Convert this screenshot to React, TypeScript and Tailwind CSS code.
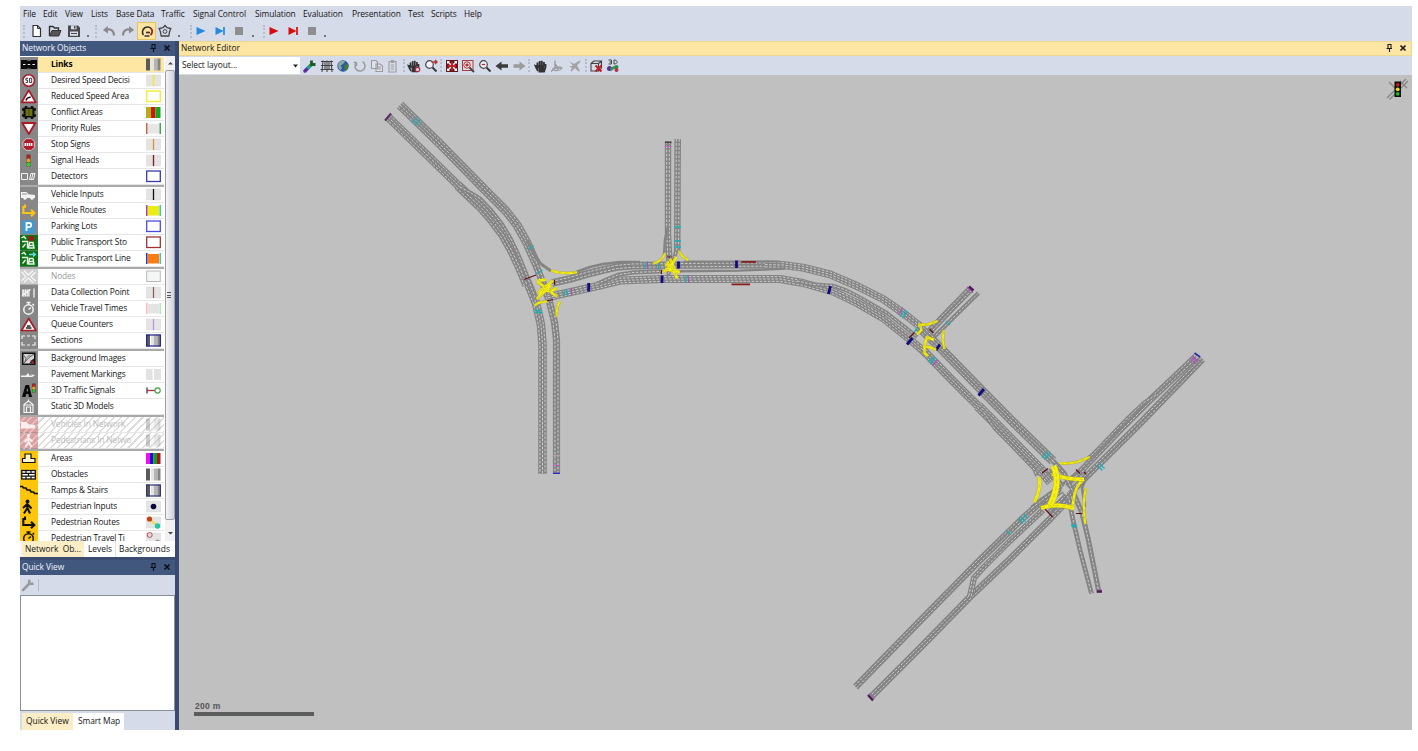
import React from "react";

type Pt = [number, number];

/* ---------- road network drawing ---------- */

function offsetPath(pts: Pt[], d: number): string {
  return pts
    .map((p, i) => {
      const a = pts[Math.max(0, i - 1)];
      const b = pts[Math.min(pts.length - 1, i + 1)];
      const dx = b[0] - a[0];
      const dy = b[1] - a[1];
      const l = Math.hypot(dx, dy) || 1;
      const x = p[0] - (dy / l) * d;
      const y = p[1] + (dx / l) * d;
      return (i ? "L" : "M") + x.toFixed(2) + " " + y.toFixed(2);
    })
    .join("");
}

function Road({ pts, w, lanes }: { pts: Pt[]; w: number; lanes: number }) {
  const pitch = (w - 1) / Math.max(lanes, 1);
  return (
    <g fill="none" strokeLinejoin="round">
      <path d={offsetPath(pts, 0)} stroke="#848484" strokeWidth={w} />
      {Array.from({ length: lanes }, (_, i) => (
        <path
          key={i}
          d={offsetPath(pts, (i - (lanes - 1) / 2) * pitch)}
          stroke="#cccccc"
          strokeWidth={1}
          strokeDasharray="2.6 1.5"
        />
      ))}
    </g>
  );
}

const roads: { pts: Pt[]; w: number; lanes: number }[] = [
  // north-west arm
  { pts: [[517, 225], [527, 243], [537, 268], [543, 283], [549, 300], [554.5, 322], [556.5, 340], [556.5, 473.5]], w: 7.2, lanes: 2 },
  { pts: [[400, 105], [440, 144], [493, 198], [506, 211], [517, 225], [527, 243], [535, 261]], w: 9, lanes: 3 },
  { pts: [[388, 117], [425, 153], [463, 190], [477, 203], [492, 218], [505, 235], [514, 251], [521, 268], [529, 286], [536, 303], [541, 325], [542.5, 345], [542.5, 474]], w: 8.6, lanes: 3 },
  { pts: [[458, 185.5], [470, 197], [480, 206.5], [491, 219], [503, 235], [512, 251], [519, 266], [527, 285]], w: 9.4, lanes: 3 },
  { pts: [[460, 187], [471, 193], [480, 198.5], [491, 210], [502, 224], [511, 239], [519, 256], [527, 276], [535, 297]], w: 4, lanes: 1 },
  { pts: [[527, 240], [534, 254], [541, 264], [551, 271]], w: 3, lanes: 0 },
  { pts: [[576, 272], [590, 267], [603, 264], [620, 262], [640, 262]], w: 2.6, lanes: 0 },
  // corridor, upper carriageway
  { pts: [[552, 283], [570, 279], [587, 274], [603, 270], [617, 267], [633, 265.6], [668, 265.3], [700, 265], [760, 264.6], [783, 265]], w: 7.6, lanes: 2 },
  { pts: [[765, 264.6], [783, 265], [803, 267.6], [830, 274.4], [857, 286], [883, 299], [904, 313.6], [923, 328.6]], w: 8, lanes: 3 },
  { pts: [[684, 261.4], [780, 261.4]], w: 2, lanes: 0 },
  // corridor, lower carriageway
  { pts: [[548, 298], [557, 295], [573, 291.5], [600, 285.5], [620, 280.5], [663, 279], [720, 279], [780, 279], [803, 283], [833, 291.5], [857, 303], [883, 318], [908, 338], [927, 354]], w: 8, lanes: 3 },
  { pts: [[597, 284], [608, 279], [619, 274.5], [634, 272.4], [662, 271.4]], w: 4.2, lanes: 1 },
  { pts: [[679, 271.2], [740, 270.6], [765, 269.6], [785, 268.5]], w: 2.4, lanes: 0 },
  { pts: [[797, 281], [813, 284.4], [833, 285.6], [847, 290.6], [860, 297.4], [887, 313], [905, 327], [917, 337]], w: 3.8, lanes: 1 },
  // north arm
  { pts: [[668, 141.5], [668, 235], [669.5, 262]], w: 6.4, lanes: 2 },
  { pts: [[667.5, 228], [665, 240], [664, 256]], w: 2.6, lanes: 0 },
  { pts: [[677.7, 139], [677.2, 252]], w: 6.6, lanes: 2 },
  { pts: [[677, 248], [673, 262], [668, 275]], w: 4, lanes: 1 },
  // small north-east arm
  { pts: [[970.5, 289], [948, 312], [929, 332]], w: 7.2, lanes: 2 },
  { pts: [[978.5, 293], [955, 316], [934, 337]], w: 4.4, lanes: 1 },
  // corridor towards the south-east
  { pts: [[918, 326], [940, 347.5], [980, 388.5], [1013, 422], [1053, 461]], w: 9, lanes: 3 },
  { pts: [[921, 348], [950, 378], [987, 415], [1000, 428], [1037, 466], [1046, 476]], w: 8.4, lanes: 3 },
  { pts: [[978, 406], [988, 416], [999, 427], [1041, 470], [1051, 482]], w: 10, lanes: 4 },
  { pts: [[984, 413], [995, 429], [1008, 442], [1034, 469], [1037, 476]], w: 3.6, lanes: 1 },
  // big junction arms
  { pts: [[1196, 356.5], [1148, 402], [1120, 430], [1080, 472], [1040, 508]], w: 6.8, lanes: 2 },
  { pts: [[1156, 395], [1144, 402.5], [1129, 416.5], [1092, 455], [1088, 458]], w: 3.6, lanes: 1 },
  { pts: [[1202.5, 359], [1140, 423.5], [1093, 470], [1050, 513]], w: 7, lanes: 2 },
  { pts: [[855.5, 687], [920, 621], [980, 560], [1023, 518], [1042, 501], [1062, 490]], w: 6.8, lanes: 2 },
  { pts: [[870, 698], [920, 648], [970, 597], [1010, 559], [1052, 517], [1070, 498]], w: 6.8, lanes: 2 },
  { pts: [[970, 596], [974, 578], [983, 568], [1010, 541], [1043, 510]], w: 6, lanes: 2 },
  { pts: [[1032, 508], [1050, 494], [1085, 470]], w: 5, lanes: 1 },
  { pts: [[1053, 461], [1064, 473], [1074, 494], [1082, 513], [1088, 538], [1099, 592.5]], w: 5.2, lanes: 1 },
  { pts: [[1048, 470], [1060, 483], [1069, 499], [1073, 520], [1080, 550], [1091.5, 593.5]], w: 4.8, lanes: 1 },
  { pts: [[1087, 476], [1082, 488], [1085, 507]], w: 2.6, lanes: 0 },
];

const marks: { c: string; w: number; d: string }[] = [
  { c: "#5b2a66", w: 2, d: "M385 120.5L391 113.5" },
  { c: "#c05ac0", w: 1, d: "M665 146.5H671.5M553 465.5H560" },
  { c: "#4a3a4a", w: 1.6, d: "M665 142.3H671.5" },
  { c: "#b09ab0", w: 1, d: "M553 455.5H560" },
  { c: "#3030c0", w: 1.4, d: "M553 473.3H560" },
  { c: "#1eaeb6", w: 1.3, d: "M412 123L417.5 117.5M415 125.5L420 120M527.5 249.5L534 245.5M536 274L542.5 270M534.5 310.5H541.5M535.5 312.5H542M674 227H681M674 241H681M674 247H681M564.5 290V296M567 289.5V295.5M645.5 262V269M658.5 262V269M686 275V283M900 317L905 309.5M902.5 318.5L907.5 311M914 332L918 327.5M928 362L933.5 356.5M930 364L935.500 358M946 321L950 325M1042 457.500L1048.500 451.5M1044 459.500L1050.500 453.500M1097.500 465.500L1102.500 470.500M1099.500 463.500L1104.500 468.500M1071 525H1076.500M1071.500 526.500H1077M1018.500 518.500L1023 523.500M1021 516.500L1025.500 521.500M1024 514L1028 518.500M1006.500 530.500L1010.500 534.500" },
  { c: "#b24cc4", w: 1.1, d: "M571.5 288V295.5M647.5 261.5V269M688.5 275.5V283M898 315L903 307.5M932.5 365.5L938 360M967 287L973 292.5M1190 358L1195.5 363.5M1192.5 356L1198 361.5" },
  { c: "#120c80", w: 2.8, d: "M588.7 283V291.5M662 275.5V283M678.5 261.5V268.5M736.5 260.5V268M830.5 286L828.5 294M912.5 338L907 344.5M940 344.5L936 350M984 389L978.5 395.5" },
  { c: "#5e0f18", w: 1.2, d: "M524 279.5L536 275M554.5 280V285M546 301L553 299.5M667 257H671.5M661.5 270V274M679.5 270V273M909 338L914.5 332.5M929.5 329L933.5 333M1042 473L1048 468.5M1045 509L1052.5 517M1076 513.5H1082M1076 469.5L1080 473.5M1084 472L1086 474" },
  { c: "#861c1c", w: 1.8, d: "M741.5 261.8H756M731.5 284.3H750" },
  { c: "#4a2050", w: 2.4, d: "M969 286.5L973.5 290.5M868 695L873 700.5M1097 591.5H1102" },
  { c: "#3030a8", w: 2, d: "M1194.5 353L1200 357" },
  { c: "#a464b4", w: 1.2, d: "M869 693.5L874.5 699M1097 589.5H1101.5" },
];

const yellow: { w: number; d: string }[] = [
  { w: 2.2, d: "M551 270.5C558 273 566 274 577 272.2M653.5 263.5C659 262 664 258 665 253M679 251C681 256 684 258 688 260M556.5 316.5C556.5 309 557 305 560 301.5M534.5 305.5C539 301 544 302 547 301.5" },
  { w: 2.6, d: "M537 299C543 291 548 284 553 280.5M537 282C545 286 548 291 557 296.5M537 281L546 279.5M541 289L551 291L557 288M538 293L549 284M540 296L551 285.5" },
  { w: 2.6, d: "M663 272C669 270 673 263 676.5 257M665 264.5L673 267L677 278.5M665 269L680 272M667 261.5L676 275M670 259L675 270" },
  { w: 2.2, d: "M918 324.5C925 325.5 931 324 937.5 321M920 325L921.5 330L917 334.5M943.5 330.5C942.5 338 943 344 944.5 349" },
  { w: 2.5, d: "M927.5 336L924.5 345V353L928 356M925 347C931 346 934 349 936 350M927 337L934 340" },
  { w: 2.2, d: "M1060 462.8C1070 464.5 1080 462 1089.5 457M1086 488C1082.5 500 1084 512 1085.3 524" },
  { w: 3.2, d: "M1039 477C1041 486 1038 495 1034.5 502" },
  { w: 2.6, d: "M1084 479.5C1075 485 1074 496 1072.5 507" },
  { w: 4, d: "M1041 508C1052 504 1065 505 1074 508.5" },
  { w: 3.8, d: "M1052 474C1062 478 1072 479.5 1084 479.5" },
  { w: 6, d: "M1053.5 466C1059 477 1057 493 1050 505" },
];

function NetworkMap() {
  return (
    <svg className="absolute inset-0 h-full w-full" viewBox="179 75 1233 655" preserveAspectRatio="xMinYMin slice">
      {roads.map((r, i) => (
        <Road key={i} {...r} />
      ))}
      <path d="M1065 484L1070 489.5L1065.5 495L1061 490Z" fill="#c0c0c0" />
      {marks.map((m, i) => (
        <path key={i} d={m.d} stroke={m.c} strokeWidth={m.w} fill="none" />
      ))}
      {yellow.map((y, i) => (
        <g key={i} fill="none">
          <path d={y.d} stroke="#b5ae20" strokeWidth={y.w + 0.5} />
          <path d={y.d} stroke="#f6f010" strokeWidth={y.w - 0.3} />
          <path d={y.d} stroke="#c4bc2c" strokeWidth={0.6} strokeDasharray="4 3" />
        </g>
      ))}
      <g fill="none" stroke="#858585" strokeWidth="1.3">
        <path d="M1387 98L1406 79M1389.5 99.5L1408 81M1389 82L1396 89M1400 81L1407 88" />
      </g>
      <rect x="1394.5" y="81.5" width="6.5" height="15.5" fill="#0d0d0d" />
      <circle cx="1397.7" cy="84.8" r="1.9" fill="#c01818" />
      <circle cx="1397.7" cy="89.3" r="1.9" fill="#e8d820" />
      <circle cx="1397.7" cy="93.8" r="1.9" fill="#18b828" />
    </svg>
  );
}

/* ---------- network object list ---------- */

type IconKey = keyof typeof objectIcons;

const W = "#f4f4f4";
const routeArrow = "M5 2V4.500H3.300V10.500H14M11 7.300L14.300 10.500L11 13.700";
const tram = "M1.500 3.500L4 2L6 4.500M2 7H7.500V14M2.500 13L5.500 9.500M9.500 8L8.500 13.500H14L13 8ZM8.500 11H14";

const objectIcons = {
  links: (
    <g>
      <rect x="1" y="3.500" width="16" height="9" fill="#0a0a0a" />
      <path d="M3 8H15" stroke="#eee" strokeWidth="1" strokeDasharray="2.500 2.200" />
      <path d="M7 3.500H11M7 12.700H11" stroke="#777" strokeWidth="1.600" />
    </g>
  ),
  speed: (
    <g>
      <circle cx="8.700" cy="8" r="5.800" fill="#fff" stroke="#a81c28" strokeWidth="1.600" />
      <path d="M8 5.800H5.900V7.700H7.600V10H5.700M9.600 5.800H11.700V10H9.600Z" stroke="#222" fill="none" strokeWidth="0.900" />
    </g>
  ),
  reduced: (
    <g>
      <path d="M8.700 1.800L15.700 13.800H1.700Z" fill="#fff" stroke="#a81c28" strokeWidth="1.700" strokeLinejoin="round" />
      <path d="M6 12C6.500 9.500 9 8.500 10.700 8.800" stroke="#111" strokeWidth="1.500" fill="none" />
    </g>
  ),
  conflict: (
    <g>
      <rect x="3.500" y="3" width="11" height="10" fill="#111" />
      <path d="M6 1.500V14.500M12 1.500V14.500M2 5H16M2 11H16" stroke="#111" strokeWidth="2.400" />
      <rect x="5.500" y="4.500" width="7" height="7" fill="#5d5c10" />
      <path d="M7 4.500V11.500M11 4.500V11.500" stroke="#86841c" />
    </g>
  ),
  priority: <path d="M2.300 2.500H15.300L8.800 13.500Z" fill="#fff" stroke="#a81c28" strokeWidth="1.900" strokeLinejoin="round" />,
  stop: (
    <g>
      <path d="M6.200 2.200H11.400L14.600 5.400V10.600L11.400 13.800H6.200L3 10.600V5.400Z" fill="#b01c2a" stroke="#e6d8d8" strokeWidth="0.800" />
      <path d="M4.500 8H13.200" stroke="#fff" strokeWidth="3" strokeDasharray="1.500 0.600" />
    </g>
  ),
  signal: (
    <g>
      <rect x="6.500" y="2" width="4" height="12" fill="#5b4a3a" />
      <circle cx="8.500" cy="4.200" r="1.900" fill="#b02020" />
      <circle cx="8.500" cy="8" r="1.900" fill="#e0a020" />
      <circle cx="8.500" cy="12" r="2" fill="#30d030" />
    </g>
  ),
  detectors: <path d="M1.500 5H7.500V11H1.500ZM9.500 11L11 5H15L13.500 11ZM11.500 11L13 5" fill="none" stroke={W} strokeWidth="1" />,
  car: (
    <g>
      <path d="M1 9V5.500H6.500L8.500 7.700L15 8.500V11.500H1Z" fill={W} />
      <path d="M2 7.500H7" stroke="#888" />
      <circle cx="5" cy="11.800" r="1.500" fill={W} />
      <circle cx="12" cy="11.800" r="1.500" fill={W} />
    </g>
  ),
  vroute: <path d={routeArrow} fill="none" stroke="#f7c21a" strokeWidth="2.200" />,
  parking: (
    <g>
      <rect x="2" y="2" width="13" height="13" fill="#3f9ad2" />
      <path d="M6.500 12.500V4.500H9C12 4.500 12 8.700 9 8.700H6.500" fill="none" stroke="#fff" strokeWidth="1.800" />
    </g>
  ),
  ptstop: (
    <g>
      <rect width="18" height="16" fill="#0d7414" />
      <rect x="8.500" y="1.500" width="5.500" height="5" rx="1.500" fill="#a01818" />
      <path d={tram} fill="none" stroke="#e8f4e8" strokeWidth="1.400" />
    </g>
  ),
  ptline: (
    <g>
      <rect width="18" height="16" fill="#0d7414" />
      <path d="M9 4H15M13 2L15.300 4L13 6" stroke="#6cd4e8" strokeWidth="1.400" fill="none" />
      <path d={tram} fill="none" stroke="#e8f4e8" strokeWidth="1.400" />
    </g>
  ),
  nodes: (
    <g>
      <rect width="18" height="16" fill="#cfcfcf" />
      <path d="M1.500 3.500L6 8L1.500 12.500M15.500 3.500L11 8L15.500 12.500M4 2L8.500 6.500L13 2M4 14L8.500 9.500L13 14" fill="none" stroke="#f6f6f6" strokeWidth="1.300" />
    </g>
  ),
  datacol: (
    <g>
      <path d="M2 5H10V12H2Z" fill="#bdbdbd" />
      <path d="M3 5V12M5.500 5V12M8 5V12M2 11L10.500 5M14 4V13" stroke={W} strokeWidth="1.300" fill="none" />
    </g>
  ),
  watch: (
    <g fill="none" stroke={W} strokeWidth="1.500">
      <circle cx="8.500" cy="9" r="4.700" />
      <path d="M8.500 9L11 7M6.500 2H10.500M8.500 2V4M12.500 3.500L14 5" />
    </g>
  ),
  queue: (
    <g>
      <path d="M8.700 2L16 14H1.500Z" fill="#fff" stroke="#a81c28" strokeWidth="1.700" strokeLinejoin="round" />
      <path d="M6 11.500H11.500M7 9.500H10.500" stroke="#222" strokeWidth="1.300" />
    </g>
  ),
  sections: <path d="M5 3.500H2V6.500M2 9.500V12.500H5M12 3.500H15V6.500M15 9.500V12.500H12M7 3.500H10M7 12.500H10" fill="none" stroke={W} strokeWidth="1.100" />,
  bg: (
    <g>
      <rect x="2" y="2" width="13.500" height="12.500" fill="#111" />
      <rect x="3.500" y="3.500" width="10.500" height="9.500" fill="#d6d6d6" />
      <path d="M4 12.500L9 7L14 3.500M4 5L6 8L5 11M10 4L7 7" stroke="#555" strokeWidth="1" fill="none" />
      <path d="M9.500 13L11 10L14 8V13Z" fill="#222" />
      <path d="M11 10L14 13" stroke="#b02030" strokeWidth="1.600" />
    </g>
  ),
  pavement: <path d="M1 9H6L7.500 7H9V9H12.500L11 7.500L15 9L12 10.500H1Z" fill={W} />,
  sig3d: (
    <g>
      <path d="M5.500 2.500H9L12 14.500H8.800L8.500 11.500H6.300L5.500 14.500H2ZM7 6L6.700 9H8L7.700 6Z" fill="#0a0a0a" />
      <rect x="12" y="1" width="3.500" height="9" fill="#4d3d2d" />
      <circle cx="13.700" cy="2.800" r="1.600" fill="#c02020" />
      <circle cx="13.700" cy="5.700" r="1.600" fill="#e0b020" />
      <circle cx="13.700" cy="8.500" r="1.600" fill="#28c030" />
    </g>
  ),
  model: <path d="M4 14V6L8.500 2.500L13 6V14ZM6.500 14V8.500H10.500V14M4.500 6.500H12.500M8.500 2.500V1" fill="none" stroke={W} strokeWidth="1.200" />,
  vnet: (
    <g>
      <rect width="18" height="16" fill="#dba0a0" />
      <path d="M-2 14L14 -2M2 18L18 2M8 18L20 6M-2 8L8 -2" stroke="#eccaca" strokeWidth="1.200" />
      <path d="M1 9V5.500H6.500L8.500 7.700L15 8.500V12H1Z" fill="#fbeeee" />
    </g>
  ),
  pnet: (
    <g>
      <rect width="18" height="16" fill="#dba0a0" />
      <path d="M-2 14L14 -2M2 18L18 2M8 18L20 6M-2 8L8 -2" stroke="#eccaca" strokeWidth="1.200" />
      <circle cx="8.500" cy="3" r="1.700" fill="#fbeeee" />
      <path d="M8.500 5V9.500L5.500 14.500M8.500 9.500L11.500 14.500M4.500 9.500L8.500 5.500L12.500 9" stroke="#fbeeee" strokeWidth="2" fill="none" />
    </g>
  ),
  areas: <path d="M2.500 12V8H5V3.500H11V8H15V12Z" fill="#fff6cf" stroke="#111" strokeWidth="1.200" />,
  obstacles: (
    <g>
      <rect x="1.700" y="4" width="13.600" height="8.500" fill="#fff" stroke="#111" strokeWidth="1.300" />
      <path d="M2 6.800H15M2 9.600H15M6 4V6.800M11 4V6.800M8.500 6.800V9.600M6 9.600V12.500M11 9.600V12.500" stroke="#111" strokeWidth="1.200" />
    </g>
  ),
  ramps: <path d="M0 4H2.500L3.500 5.500H6L7 7.500H10L11 9.500H13.500L14.500 11H18" fill="none" stroke="#111" strokeWidth="1.700" />,
  ped: (
    <g>
      <circle cx="7.500" cy="2.900" r="1.900" fill="#111" />
      <path d="M7.300 4.800V9.500L4 15M7.500 9.500L10 15M3 9.500L7.300 5.500L11.500 10" stroke="#111" strokeWidth="2" fill="none" />
    </g>
  ),
  proute: <path d={routeArrow} fill="none" stroke="#111" strokeWidth="2.100" />,
  ptime: (
    <g fill="none" stroke="#111" strokeWidth="1.500">
      <circle cx="8.500" cy="8" r="4.800" />
      <path d="M8.500 8L11 6M6.500 1.500H10.500M8.500 1V3M12.800 2.500L14 4" />
    </g>
  ),
};

/* swatches are drawn on a 15x13 grid */
const grey = <rect x="0.500" y="1" width="14" height="11" fill="#e4e4e4" stroke="#d6d6d6" strokeWidth="0.500" />;
const bars = (
  <g>
    <rect y="0.500" width="4" height="12" fill="#5a5a5a" />
    <rect x="5" y="0.500" width="3" height="12" fill="#e4e4e4" />
    <rect x="8" y="0.500" width="3.500" height="12" fill="#b4b4b4" />
    <rect x="11.500" y="0.500" width="3" height="12" fill="#858585" />
  </g>
);
const frame = (c: string, w = 1) => <rect x="0.700" y="1" width="13.600" height="10.500" fill="#fff" stroke={c} strokeWidth={w} />;
const vline = (c: string, w = 1) => (
  <g>
    {grey}
    <path d="M7.500 1V12" stroke={c} strokeWidth={w} />
  </g>
);
const block = (l: string, m: string, r: string) => (
  <g>
    <rect x="2" y="2" width="11" height="9.500" fill={m} />
    <path d="M0.800 1V12" stroke={l} strokeWidth="1.400" />
    <path d="M14.200 1V12" stroke={r} strokeWidth="1.400" />
  </g>
);

type Row = { icon: IconKey; label: string; swatch?: React.ReactNode; state?: "active" | "off" | "hatched"; ped?: boolean };

const groups: Row[][] = [
  [
    { icon: "links", label: "Links", swatch: bars, state: "active" },
    { icon: "speed", label: "Desired Speed Decisi", swatch: vline("#ece64a", 1.8) },
    { icon: "reduced", label: "Reduced Speed Area", swatch: frame("#f2ee40", 1.5) },
    {
      icon: "conflict",
      label: "Conflict Areas",
      swatch: (
        <g>
          <rect y="1" width="5" height="11" fill="#b2b014" />
          <rect x="5" y="1" width="4.500" height="11" fill="#d01414" />
          <rect x="9.500" y="1" width="5" height="11" fill="#14a81c" />
        </g>
      ),
    },
    { icon: "priority", label: "Priority Rules", swatch: block("#c05a30", "#e6e6e6", "#2e9a48") },
    { icon: "stop", label: "Stop Signs", swatch: vline("#e88a30", 1.3) },
    { icon: "signal", label: "Signal Heads", swatch: vline("#8a1a1a", 1.3) },
    { icon: "detectors", label: "Detectors", swatch: frame("#3a3aa8", 1.3) },
  ],
  [
    { icon: "car", label: "Vehicle Inputs", swatch: vline("#111111", 1.3) },
    { icon: "vroute", label: "Vehicle Routes", swatch: block("#b02878", "#e8ee10", "#2cc0b0") },
    { icon: "parking", label: "Parking Lots", swatch: frame("#4a4ae8", 1.3) },
    { icon: "ptstop", label: "Public Transport Sto", swatch: frame("#9a3434", 1.3) },
    { icon: "ptline", label: "Public Transport Line", swatch: block("#24208a", "#fa7d14", "#2cc0b0") },
  ],
  [
    { icon: "nodes", label: "Nodes", swatch: <rect x="0.700" y="1" width="13.600" height="10.500" fill="#f4f6f6" stroke="#b8b8b8" />, state: "off" },
    { icon: "datacol", label: "Data Collection Point", swatch: vline("#8a5a48", 1.2) },
    { icon: "watch", label: "Vehicle Travel Times", swatch: block("#f0b8b8", "#e4e4e4", "#a8e8b0") },
    { icon: "queue", label: "Queue Counters", swatch: vline("#b890f0", 1.2) },
    {
      icon: "sections",
      label: "Sections",
      swatch: (
        <g>
          {bars}
          <rect x="0.600" y="1" width="13.800" height="11" fill="none" stroke="#26268e" strokeWidth="1.200" />
        </g>
      ),
    },
  ],
  [
    { icon: "bg", label: "Background Images" },
    {
      icon: "pavement",
      label: "Pavement Markings",
      swatch: <path d="M0 1H6.500V12H0ZM8 1H15V12H8Z" fill="#e2e2e2" />,
    },
    {
      icon: "sig3d",
      label: "3D Traffic Signals",
      swatch: (
        <g fill="none">
          <path d="M1 3.500V9.500" stroke="#26264a" strokeWidth="1.200" />
          <path d="M1 6.500H9" stroke="#a83040" strokeWidth="1.300" />
          <circle cx="11.600" cy="6.500" r="2.600" stroke="#3aa040" strokeWidth="1.100" />
        </g>
      ),
    },
    { icon: "model", label: "Static 3D Models" },
  ],
  [
    { icon: "vnet", label: "Vehicles In Network", swatch: <g opacity="0.300">{bars}</g>, state: "hatched" },
    { icon: "pnet", label: "Pedestrians In Netwo", swatch: <g opacity="0.300">{bars}</g>, state: "hatched" },
  ],
  [
    {
      icon: "areas",
      label: "Areas",
      ped: true,
      swatch: (
        <g>
          <rect y="1" width="4" height="11" fill="#ee10ee" />
          <rect x="4" y="1" width="3.500" height="11" fill="#1414c0" />
          <rect x="7.500" y="1" width="3.500" height="11" fill="#10a020" />
          <rect x="11" y="1" width="3.500" height="11" fill="#a81420" />
        </g>
      ),
    },
    { icon: "obstacles", label: "Obstacles", ped: true, swatch: bars },
    {
      icon: "ramps",
      label: "Ramps & Stairs",
      ped: true,
      swatch: (
        <g>
          {bars}
          <rect x="0.600" y="1" width="13.800" height="11" fill="none" stroke="#34347e" strokeWidth="1.200" />
        </g>
      ),
    },
    {
      icon: "ped",
      label: "Pedestrian Inputs",
      ped: true,
      swatch: (
        <g>
          {grey}
          <circle cx="7.500" cy="6.500" r="2.800" fill="#06063a" />
        </g>
      ),
    },
    {
      icon: "proute",
      label: "Pedestrian Routes",
      ped: true,
      swatch: (
        <g>
          {grey}
          <path d="M3.500 3L11.500 10.500" stroke="#f0d840" strokeWidth="1.800" />
          <circle cx="3.500" cy="3" r="2.600" fill="#c04414" />
          <circle cx="11.500" cy="10" r="2.700" fill="#20c8a8" />
        </g>
      ),
    },
    {
      icon: "ptime",
      label: "Pedestrian Travel Ti",
      ped: true,
      swatch: (
        <g>
          {grey}
          <circle cx="3.700" cy="3" r="2.500" fill="#f0d8d8" stroke="#a04848" strokeWidth="0.900" />
          <circle cx="11.500" cy="10" r="2.500" fill="#999" />
        </g>
      ),
    },
  ],
];

function ObjectRow({ row }: { row: Row }) {
  const iconBg = row.ped ? "bg-[#fdc60a]" : "bg-[#878787]";
  const body =
    row.state === "active"
      ? "bg-[#fee7a3] text-black font-bold"
      : row.state === "off"
        ? "bg-white text-[#9a9a9a]"
        : row.state === "hatched"
          ? "text-[#bcbcbc] bg-[repeating-linear-gradient(135deg,#fff_0px,#fff_3.500px,#dedede_3.500px,#dedede_5px)]"
          : "bg-white text-[#141414]";
  return (
    <div className="flex h-4 shrink-0">
      <svg className={`h-4 w-[18px] shrink-0 ${iconBg}`} viewBox="0 0.5 18 16">
        {objectIcons[row.icon]}
      </svg>
      <div className={`flex min-w-0 flex-1 items-center border-b border-[#e6e6e6] pl-[13px] pr-[3px] ${body}`}>
        <span className="flex-1 pb-[2px] text-[8.4px] leading-[13px] tracking-[-0.15px] whitespace-nowrap">{row.label}</span>
        <svg className="h-[13px] w-[15px] shrink-0" viewBox="0 0 15 13">
          {row.swatch}
        </svg>
      </div>
    </div>
  );
}

/* ---------- toolbars ---------- */

const Grip = () => <span className="h-[13px] w-[2px] border-l-2 border-dotted border-[#b7bccb]" />;

function Glyph({ children }: { children: React.ReactNode }) {
  return (
    <svg className="h-[14px] w-[14px] shrink-0" viewBox="0 0 14 14" fill="none">
      {children}
    </svg>
  );
}

function Dot() {
  return <span className="mt-[9px] h-[2px] w-[2px] shrink-0 bg-[#777]" />;
}

const Play = ({ c }: { c: string }) => (
  <Glyph>
    <path d="M2.500 3L11.500 7L2.500 11Z" fill={c} />
  </Glyph>
);
const Step = ({ c }: { c: string }) => (
  <Glyph>
    <path d="M2.500 3L10.500 7L2.500 11Z" fill={c} />
    <path d="M11 3V11" stroke={c} strokeWidth="1.700" />
  </Glyph>
);
const Stop = () => (
  <Glyph>
    <rect x="3" y="3" width="8" height="8" fill="#8e8e8e" />
  </Glyph>
);

const mainTools: { w: string; el: React.ReactNode }[] = [
  { w: "w-[8px]", el: <Grip /> },
  { w: "w-[18px]", el: <Glyph><path d="M3 1.500H7.500L10.500 4.500V12.500H3Z" fill="#fff" stroke="#333" strokeWidth="1.200" /><path d="M7.500 1.500V4.500H10.500" stroke="#333" /></Glyph> },
  { w: "w-[18px]", el: <Glyph><path d="M1.500 12V2.500H5L6.500 4H10.500V6" stroke="#333" strokeWidth="1.400" /><path d="M1.500 12L4 6.500H13L10.800 12Z" fill="#555" stroke="#333" /></Glyph> },
  { w: "w-[20px]", el: <Glyph><path d="M1 1.500H11L13 3.500V13H1Z" fill="#4a4a4a" /><rect x="4" y="1.500" width="5.500" height="3.800" fill="#d6dbe9" /><rect x="7" y="2" width="1.500" height="2.500" fill="#4a4a4a" /><rect x="3" y="7.500" width="8" height="4.300" fill="#d6dbe9" /><path d="M4 9.500H10" stroke="#4a4a4a" /></Glyph> },
  { w: "w-[8px]", el: <Dot /> },
  { w: "w-[8px]", el: <Grip /> },
  { w: "w-[18px]", el: <Glyph><path d="M4 6C8 4.500 12 6 12 11.500" stroke="#8b8b8b" strokeWidth="2.200" /><path d="M0.800 6L6 2V9.500Z" fill="#8b8b8b" /></Glyph> },
  { w: "w-[19px]", el: <Glyph><path d="M10 6C6 4.500 2 6 2 11.500" stroke="#8b8b8b" strokeWidth="2.200" /><path d="M13.200 6L8 2V9.500Z" fill="#8b8b8b" /></Glyph> },
  { w: "w-[19px] h-[18px] bg-[#fde5a0] border border-[#e5c365]", el: <Glyph><path d="M4.500 12H9.500" stroke="#333" strokeWidth="1.500" /><path d="M3.500 11A5 5 0 1 1 11.500 5" stroke="#333" strokeWidth="1.600" /><path d="M11.500 5A5 5 0 0 1 10.500 11" stroke="#a02020" strokeWidth="1.800" /><path d="M6 8.500H10" stroke="#333" strokeWidth="1.700" /></Glyph> },
  { w: "w-[18px]", el: <Glyph><path d="M7 1.500L9 3.700L12.800 4.500L11.500 8L10.800 12H3.200L2.500 8L1.200 4.500L5 3.700Z" stroke="#444" strokeWidth="1.300" /><circle cx="7" cy="7.500" r="1.900" stroke="#444" /></Glyph> },
  { w: "w-[10px]", el: <Dot /> },
  { w: "ml-[3px] w-[8px]", el: <Grip /> },
  { w: "w-[12px]", el: <Play c="#2489e0" /> },
  { w: "w-[26px]", el: <Step c="#2489e0" /> },
  { w: "w-[12px]", el: <Stop /> },
  { w: "w-[16px]", el: <Dot /> },
  { w: "w-[6px]", el: <Grip /> },
  { w: "w-[13px]", el: <Play c="#d80c0c" /> },
  { w: "w-[26px]", el: <Step c="#d80c0c" /> },
  { w: "w-[12px]", el: <Stop /> },
  { w: "w-[14px]", el: <Dot /> },
];

const hand = "M3 7.500L1.500 6.500M4 12C3 10 2 8.500 1.500 7L3.500 8V3.500M5.700 7V2M7.800 7V1.800M9.900 7.500V3M4.500 12.500H10L11.500 8V5";
const lens = (
  <g>
    <circle cx="5.500" cy="5.500" r="3.800" fill="#eef1f8" stroke="#444" strokeWidth="1.200" />
    <path d="M8.500 8.500L12.500 12.500" stroke="#333" strokeWidth="1.800" />
  </g>
);

const editorTools: { w: string; el: React.ReactNode }[] = [
  { w: "w-[20px]", el: <Glyph><path d="M2 12L5 9" stroke="#5c2c98" strokeWidth="3.400" strokeLinecap="round" /><path d="M4.500 9.500L7 7" stroke="#20a0b0" strokeWidth="3.200" /><path d="M6.500 7.500L9.500 4.500" stroke="#2c9c38" strokeWidth="3.600" /><path d="M8.500 1.500V5.500H12.500" stroke="#1c5c2c" strokeWidth="2.800" /></Glyph> },
  { w: "w-[14px]", el: <Glyph><path d="M1 2.500H13M1 6.500H13M0.500 10.500H13.500M3 1.500L2 13M7 1.500V13M11 1.500L12 13M5 2V11M9 2V11" stroke="#444" strokeWidth="1.100" /></Glyph> },
  { w: "w-[18px]", el: <Glyph><circle cx="7" cy="7" r="5.700" fill="#2a57a8" /><path d="M2.500 4C5 1 8 1.500 9 3L6.500 5.500L4.500 6.500L6 9L4.500 11.500C2.500 10 1.500 7 2.500 4Z" fill="#8aa8a0" /><path d="M8.500 6L12.500 5C12.500 9 11 11.500 8.500 11.500Z" fill="#45802c" /></Glyph> },
  { w: "w-[16px]", el: <Glyph><path d="M9.500 2.700A5 5 0 1 1 3.500 3.500M3.500 3.500V7M3.500 3.500H0.800" stroke="#9a9a9a" strokeWidth="1.500" /></Glyph> },
  { w: "w-[17px]", el: <Glyph><path d="M1.500 1.500H6L7.500 3V9.500H1.500ZM6 5H10L12.500 7V12.500H6Z" fill="#dfe2ea" stroke="#9a9a9a" strokeWidth="1.100" /><path d="M7.500 8H11M7.500 10H11" stroke="#9a9a9a" /></Glyph> },
  { w: "w-[16px]", el: <Glyph><path d="M3 2.500H10V13H3Z" stroke="#a0a0a0" strokeWidth="1.200" /><path d="M5 1.500H8V3.500H5ZM5 6H8M5 8H8M5 10H8" stroke="#a0a0a0" /></Glyph> },
  { w: "w-[5px]", el: <Grip /> },
  { w: "w-[16px]", el: <Glyph><path d={hand} stroke="#333" strokeWidth="1.700" /><path d="M4 6.500H9.500V12H5Z" fill="#333" /><circle cx="10.500" cy="10.500" r="2.200" fill="#d6dbe9" stroke="#b02838" strokeWidth="1.200" /></Glyph> },
  { w: "w-[17px]", el: <Glyph>{lens}<path d="M7.500 3H13M11 1L13 3L11 5" stroke="#b83030" strokeWidth="1.400" /></Glyph> },
  { w: "w-[4px]", el: <Grip /> },
  { w: "w-[17px]", el: <Glyph><rect x="1" y="1" width="12" height="12" fill="#6c1418" /><path d="M2 2H5L2 5ZM12 2V5L9 2ZM2 12V9L5 12ZM12 12H9L12 9Z" fill="#fff" /><path d="M3 3L11 11M11 3L3 11" stroke="#fff" strokeWidth="1.500" /><path d="M7 3V11M3 7H11" stroke="#c02028" strokeWidth="2.200" /></Glyph> },
  { w: "w-[16px]", el: <Glyph><rect x="1.500" y="1.500" width="10.500" height="10" fill="#e8d8dc" stroke="#a04048" /><circle cx="6" cy="6" r="3.200" fill="#fff" stroke="#a83038" /><path d="M4.300 6H7.700M6 4.300V7.700" stroke="#b01c28" strokeWidth="1.300" /><path d="M8.500 8.500L13 13" stroke="#444" strokeWidth="1.800" /></Glyph> },
  { w: "w-[17px]", el: <Glyph>{lens}<path d="M3.800 5.500H7.200" stroke="#b03030" strokeWidth="1.300" /></Glyph> },
  { w: "w-[18px]", el: <Glyph><path d="M0.500 7L6.500 2.500V5.200H13V8.800H6.500V11.500Z" fill="#3c3c3c" /></Glyph> },
  { w: "w-[15px]", el: <Glyph><path d="M13.500 7L7.500 2.500V5.200H1.500V8.800H7.500V11.500Z" fill="#9c9c9c" /></Glyph> },
  { w: "w-[6px]", el: <Grip /> },
  { w: "w-[17px]", el: <Glyph><path d={hand} stroke="#333" strokeWidth="1.900" /><path d="M3.500 6H10.500V12.500H5Z" fill="#333" /></Glyph> },
  { w: "w-[16px]", el: <Glyph><path d="M5 1.500V9H12.500M5 9L1 12.500M3 9A3 2 0 0 0 8.500 10.500M5 5L8 9" stroke="#9a9a9a" strokeWidth="1.300" /><circle cx="9.500" cy="9.500" r="1.800" stroke="#9a9a9a" /></Glyph> },
  { w: "w-[19px]", el: <Glyph><path d="M1.500 2.500L6 5L11.500 1.500L12.500 2.500L9 6.500L12 12L10.500 12.500L7 9L3.500 12.500L2.500 12L4 8.500L1 7.500L5 6.500Z" fill="#a2a2a2" /></Glyph> },
  { w: "w-[4px]", el: <Grip /> },
  { w: "w-[16px]", el: <Glyph><path d="M2 4.500L5 2H12.500V9L10 12H2ZM2 4.500H9.500V12M9.500 4.500L12.500 2" stroke="#444" strokeWidth="1.100" /><path d="M6.500 6.500L12.500 12.500M12.500 6.500L6.500 12.500" stroke="#c01c24" strokeWidth="1.900" /></Glyph> },
  { w: "w-[17px]", el: <Glyph><path d="M2.500 1H5.500V5H2.500M3.500 3H5.500M8 1V5H9.500L11 3.500V2.500L9.500 1Z" stroke="#444" strokeWidth="1" /><circle cx="3.500" cy="9.500" r="2.500" fill="#602c90" /><path d="M4.500 10.500L9 8" stroke="#2c9850" strokeWidth="2.800" /><circle cx="10.500" cy="8" r="2" fill="#289040" /><circle cx="10.500" cy="11" r="2" fill="#b83048" /></Glyph> },
];

function PanelButtons({ dark }: { dark?: boolean }) {
  const c = dark ? "#0b0f18" : "#1a1a1a";
  return (
    <svg className="mb-px h-[10px] w-[24px]" viewBox="0 0 24 10" fill="none">
      <path d="M2.500 1.500H6V5.500M3 1.500V5.500M1.500 5.500H7M4.500 5.500V9" stroke={c} strokeWidth="1.100" />
      <path d="M15.500 2.500L20.500 7.500M20.500 2.500L15.500 7.500" stroke={c} strokeWidth="1.700" />
    </svg>
  );
}

const menus: [string, string][] = [
  ["File", "w-[20px]"],
  ["Edit", "w-[22px]"],
  ["View", "w-[26px]"],
  ["Lists", "w-[25px]"],
  ["Base Data", "w-[45px]"],
  ["Traffic", "w-[32px]"],
  ["Signal Control", "w-[62px]"],
  ["Simulation", "w-[48px]"],
  ["Evaluation", "w-[49px]"],
  ["Presentation", "w-[56px]"],
  ["Test", "w-[23px]"],
  ["Scripts", "w-[33px]"],
  ["Help", "w-[24px]"],
];

function PanelTitle({ text }: { text: string }) {
  return (
    <div className="flex h-[15px] shrink-0 items-center justify-between bg-[#42577e] pl-[2px] pr-[2px] text-[#f1f4fa]">
      <span className="pb-[2px] text-[8.4px] leading-[13px] tracking-[-0.05px]">{text}</span>
      <PanelButtons dark />
    </div>
  );
}

export default function App() {
  return (
    <div className="h-[751px] w-[1418px] overflow-hidden bg-white pt-[6px] pr-[6px] pb-[21px] pl-5 text-[#141414] [font-family:'Open_Sans','Noto_Sans',sans-serif]">
      <div className="flex h-[724px] flex-col bg-[#d6dbe9]">
        <nav className="flex h-4 shrink-0 items-center pl-[3px] text-[8.4px] leading-4 tracking-[-0.1px] whitespace-nowrap">
          {menus.map(([t, w]) => (
            <span key={t} className={w}>
              {t}
            </span>
          ))}
        </nav>
        <div className="flex h-[19px] shrink-0 items-center pb-[1px]">
          {mainTools.map((t, i) => (
            <span key={i} className={`flex shrink-0 items-center justify-center ${t.w}`}>
              {t.el}
            </span>
          ))}
        </div>

        <div className="flex min-h-0 flex-1">
          <aside className="flex w-[155px] shrink-0 flex-col bg-[#42577e]">
            <PanelTitle text="Network Objects" />
            <div className="flex h-[485px] shrink-0 overflow-hidden bg-white">
              <div className="flex w-[144px] shrink-0 flex-col pt-px">
                {groups.map((g, i) => (
                  <div key={i} className={i < groups.length - 1 ? "border-b-2 border-[#a9a9a9]" : ""}>
                    {g.map((r) => (
                      <ObjectRow key={r.label} row={r} />
                    ))}
                  </div>
                ))}
              </div>
              <div className="ml-px flex w-[10px] flex-col items-center bg-[#f1f1f3]">
                <svg className="h-[14px] w-[9px]" viewBox="0 0 9 14">
                  <path d="M2 8.500L4.500 6L7 8.500Z" fill="#444" />
                </svg>
                <div className="flex h-[450px] w-[10px] items-center justify-center rounded-[2px] border border-[#9c9fa8] bg-linear-to-r from-[#f5f5f7] to-[#cfd0d6]">
                  <span className="mr-[3px] h-[6px] w-[4px] border-y border-[#555] py-[1.5px]">
                    <span className="block h-px bg-[#555]" />
                  </span>
                </div>
                <svg className="mt-[7px] h-[12px] w-[9px]" viewBox="0 0 9 12">
                  <path d="M2 5L4.500 7.500L7 5Z" fill="#444" />
                </svg>
              </div>
            </div>
            <div className="flex h-4 shrink-0 items-center bg-[#f5f6fa] pl-[2px] text-[8.4px] whitespace-nowrap">
              <span className="h-4 w-[62px] bg-[#fbedc5] pl-[3px] leading-4">Network&nbsp; Ob...</span>
              <span className="h-4 w-[32px] border-r border-[#dfe1e8] bg-white pl-[4px] leading-4">Levels</span>
              <span className="h-4 flex-1 bg-white pl-[3px] leading-4">Backgrounds</span>
            </div>
            <div className="h-[3px] shrink-0 bg-[#3a4c70]" />
            <PanelTitle text="Quick View" />
            <div className="flex h-[20px] shrink-0 items-center bg-[#d6dbe9] pl-[1px]">
              <Glyph>
                <path d="M2 12L7.500 6.500" stroke="#9a9a9a" strokeWidth="2.600" strokeLinecap="round" />
                <path d="M8.300 1.800V5.800H12.500" stroke="#9a9a9a" strokeWidth="2.600" />
              </Glyph>
              <span className="ml-[3px] h-3 border-l border-[#b4bacb]" />
            </div>
            <div className="min-h-0 flex-1 border border-[#8a8e98] bg-white" />
            <div className="flex h-[19px] shrink-0 items-end bg-[#d6dbe9] pl-[2px] text-[8.4px] whitespace-nowrap">
              <span className="h-[17px] w-[51px] bg-[#fbedc5] pl-[4px] leading-[16px]">Quick View</span>
              <span className="h-[17px] w-[51px] bg-white pl-[5px] leading-[16px] tracking-[-0.1px]">Smart Map</span>
            </div>
          </aside>

          <div className="w-[4px] shrink-0 bg-[#384a70]" />

          <main className="flex min-w-0 flex-1 flex-col">
            <div className="flex h-[15px] shrink-0 items-center justify-between border border-l-0 border-[#ecd694] bg-[#fde6a3] pl-[2px] pr-[2px]">
              <span className="pb-[2px] text-[8.4px] leading-[11px]">Network Editor</span>
              <PanelButtons />
            </div>
            <div className="flex h-[19px] shrink-0 items-center">
              <div className="flex h-[17px] w-[121px] items-center justify-between bg-white pl-[3px] pr-[2px] text-[8.4px] tracking-[-0.05px]">
                <span>Select layout...</span>
                <svg className="h-[4px] w-[5px]" viewBox="0 0 5 4">
                  <path d="M0 0.500H5L2.500 3.500Z" fill="#222" />
                </svg>
              </div>
              {editorTools.map((t, i) => (
                <span key={i} className={`flex shrink-0 items-center justify-center ${t.w}`}>
                  {t.el}
                </span>
              ))}
            </div>
            <div className="relative min-h-0 flex-1 overflow-hidden bg-[#c0c0c0]">
              <NetworkMap />
              <div className="absolute bottom-[14px] left-[15px]">
                <div className="pl-px text-[8.5px] leading-[11px] font-bold tracking-[0.3px] text-[#555] [font-family:'Liberation_Sans',sans-serif]">200 m</div>
                <div className="h-[4px] w-[120px] bg-[#5a5d5c]" />
              </div>
            </div>
          </main>
        </div>
      </div>
    </div>
  );
}
